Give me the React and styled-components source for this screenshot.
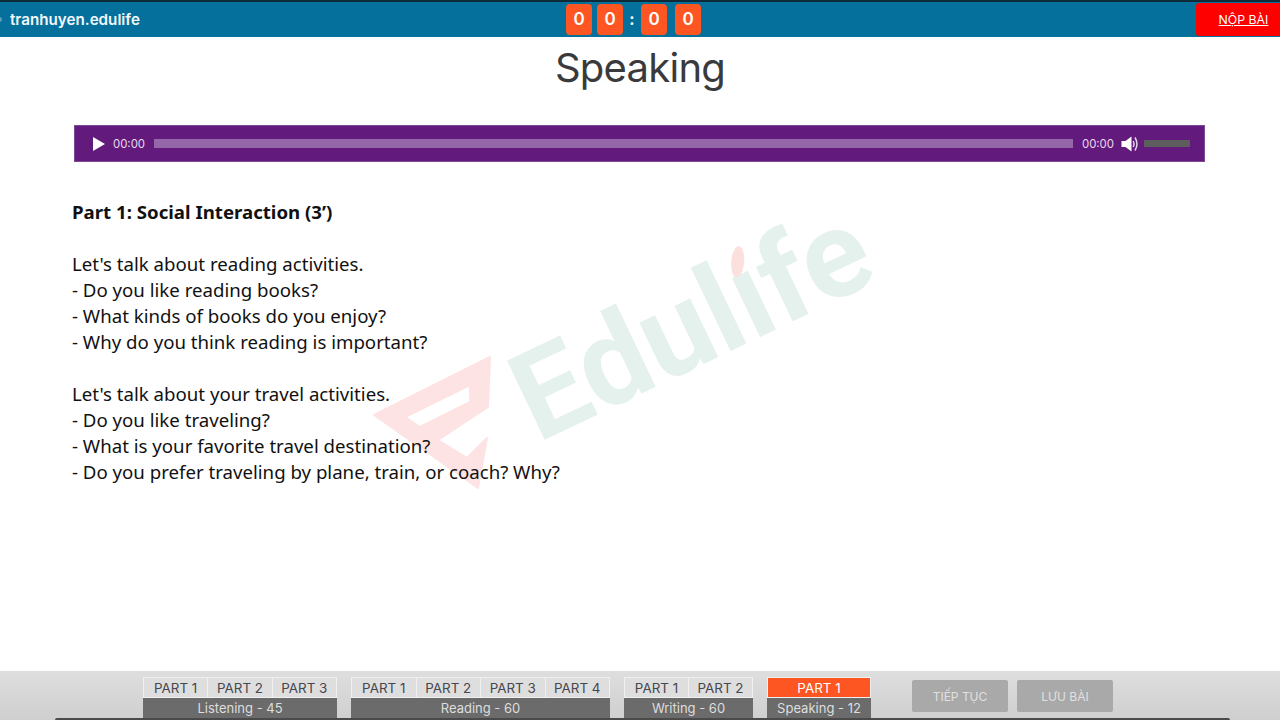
import styled, { createGlobalStyle } from "styled-components";

const GlobalStyle = createGlobalStyle`
  html, body {
    margin: 0;
    padding: 0;
    background: #fff;
  }
  #root {
    height: 720px;
  }
`;

const sections = [
  { label: "Listening - 45", parts: ["PART 1", "PART 2", "PART 3"], width: 194 },
  { label: "Reading - 60", parts: ["PART 1", "PART 2", "PART 3", "PART 4"], width: 259 },
  { label: "Writing - 60", parts: ["PART 1", "PART 2"], width: 129 },
  { label: "Speaking - 12", parts: ["PART 1"], width: 104, active: true },
];

const questions = [
  [
    "Let's talk about reading activities.",
    "- Do you like reading books?",
    "- What kinds of books do you enjoy?",
    "- Why do you think reading is important?",
  ],
  [
    "Let's talk about your travel activities.",
    "- Do you like traveling?",
    "- What is your favorite travel destination?",
    "- Do you prefer traveling by plane, train, or coach? Why?",
  ],
];

const App = () => {
  return (
    <Page>
      <GlobalStyle />
      <Header>
        <Brand>tranhuyen.edulife</Brand>
        <Timer>
          <Digit>0</Digit>
          <Digit>0</Digit>
          <Colon>:</Colon>
          <Digit>0</Digit>
          <Digit $wide>0</Digit>
        </Timer>
        <Submit>NỘP BÀI</Submit>
      </Header>

      <Main>
        <Watermark aria-hidden="true">
          <svg width="130" height="142" viewBox="0 0 130 142">
            <path
              fill="#fde3e3"
              fillRule="evenodd"
              stroke="#fde3e3"
              strokeWidth="2"
              strokeLinejoin="round"
              d="M118 4 L116 54 L66 87 L95 105 L115 85 L106 135 L2 62 Z M33 64 L48 74 L98 49 L98 32 Z"
            />
          </svg>
          <WatermarkText>
            Edul<Dotted>i</Dotted>fe
          </WatermarkText>
        </Watermark>

        <Title>Speaking</Title>

        <Player>
          <PlayIcon width="14" height="16" viewBox="0 0 14 16">
            <path fill="#fff" d="M1 1 L13 8 L1 15 Z" />
          </PlayIcon>
          <Time $before={7} $after={9}>00:00</Time>
          <Track />
          <Time $before={9} $after={7}>00:00</Time>
          <svg width="18" height="18" viewBox="0 0 18 18">
            <path fill="#fff" d="M0.5 6 H4.5 L10.5 1.5 V16.5 L4.5 12 H0.5 Z" />
            <path fill="none" stroke="#e5d4ea" strokeWidth="1.5" d="M12.2 6 Q13.8 9 12.2 12 M14 2.5 Q18 9 14 15.5" />
          </svg>
          <Volume />
        </Player>

        <Content>
          <Heading>Part 1: Social Interaction (3’)</Heading>
          {questions.map((group) => (
            <Group key={group[0]}>
              {group.map((line) => (
                <Line key={line}>{line}</Line>
              ))}
            </Group>
          ))}
        </Content>
      </Main>

      <Footer>
        {sections.map((section) => (
          <Section key={section.label} $width={section.width}>
            <Parts>
              {section.parts.map((part, i) => (
                <Part key={section.label + i} $active={section.active}>
                  {part}
                </Part>
              ))}
            </Parts>
            <SectionLabel>{section.label}</SectionLabel>
          </Section>
        ))}
        <Actions>
          <ActionButton>TIẾP TỤC</ActionButton>
          <ActionButton>LƯU BÀI</ActionButton>
        </Actions>
      </Footer>
    </Page>
  );
};

export default App;

const Page = styled.div`
  display: flex;
  flex-direction: column;
  width: 1280px;
  height: 720px;
  overflow: hidden;
  font-family: "Inter", "Liberation Sans", sans-serif;
`;

const Header = styled.header`
  flex: none;
  position: relative;
  display: grid;
  grid-template-columns: 556px auto 1fr;
  align-items: center;
  height: 35px;
  padding-left: 10px;
  background: #05709c;
  border-top: 2px solid #0e2a38;
  &::before {
    content: "";
    position: absolute;
    left: -3px;
    top: 15px;
    width: 5px;
    height: 5px;
    border-radius: 50%;
    background: #5b9dba;
  }
`;

const Brand = styled.div`
  font-size: 15.2px;
  font-weight: 600;
  color: #f2f8fb;
`;

const Timer = styled.div`
  display: flex;
  align-items: center;
  gap: 5px;
  margin-top: -1px;
`;

const Digit = styled.div`
  display: flex;
  align-items: center;
  justify-content: center;
  width: 26px;
  height: 31px;
  margin-left: ${(p) => (p.$wide ? 3 : 0)}px;
  border-radius: 4px;
  background: #fd5622;
  color: #fff;
  font-size: 17px;
  font-weight: 600;
`;

const Colon = styled.span`
  width: 8px;
  text-align: center;
  color: #fff;
  font-size: 16px;
  font-weight: 700;
`;

const Submit = styled.div`
  justify-self: end;
  display: flex;
  align-items: center;
  justify-content: center;
  box-sizing: border-box;
  width: 84px;
  height: 33px;
  margin-top: -1px;
  padding-left: 11px;
  border-radius: 3px 0 0 3px;
  background: #fe0000;
  color: #fff;
  font-size: 12.3px;
  text-decoration: underline;
`;

const Main = styled.main`
  position: relative;
  flex: 1;
  padding: 0 72px;
`;

const Watermark = styled.div`
  position: absolute;
  left: 372px;
  top: 316px;
  pointer-events: none;
`;

const WatermarkText = styled.div`
  position: absolute;
  left: 166px;
  top: -13px;
  font-family: "Roboto", "Liberation Sans", sans-serif;
  font-size: 123px;
  font-weight: 700;
  line-height: 1;
  color: #e4f1ec;
  transform: rotate(-25.5deg);
  transform-origin: 0 103.6px;
  white-space: nowrap;
`;

/* the logo swaps the dot of the i for a red leaf */
const Dotted = styled.span`
  position: relative;
  &::before {
    content: "";
    position: absolute;
    left: 4px;
    top: 14px;
    width: 26px;
    height: 32px;
    background: #fff;
  }
  &::after {
    content: "";
    position: absolute;
    left: 13px;
    top: 21px;
    width: 13px;
    height: 31px;
    border-radius: 50%;
    background: #fbe0de;
    transform: rotate(30deg);
  }
`;

const Title = styled.h1`
  margin: 0;
  height: 88px;
  padding-top: 7px;
  box-sizing: border-box;
  text-align: center;
  font-size: 40px;
  font-weight: 400;
  line-height: 48px;
  color: #3a3a3c;
  letter-spacing: -0.75px;
`;

const Player = styled.div`
  position: relative;
  display: flex;
  align-items: center;
  box-sizing: border-box;
  width: 1131px;
  height: 37px;
  margin-left: 2px;
  padding: 0 14px 0 17px;
  background: #621b7c;
  border: 1px solid #7d4a92;
`;

const PlayIcon = styled.svg`
  flex: none;
`;

const Time = styled.span`
  margin: 0 ${(p) => p.$after}px 0 ${(p) => p.$before}px;
  font-size: 11.4px;
  color: #e9d9ee;
`;

const Track = styled.div`
  flex: 1;
  height: 9px;
  background: #9566a8;
`;

const Volume = styled.div`
  width: 46px;
  height: 7px;
  margin-left: 5px;
  background: #5d5d5d;
`;

const Content = styled.div`
  position: relative;
  margin-top: 37px;
  font-family: "Noto Sans", "Open Sans", sans-serif;
  font-size: 18.65px;
  line-height: 26px;
  color: #111;
`;

const Heading = styled.div`
  font-weight: 700;
`;

const Group = styled.div`
  margin-top: 26px;
`;

const Line = styled.div``;

const Footer = styled.footer`
  flex: none;
  position: relative;
  display: flex;
  align-items: flex-start;
  gap: 14px;
  box-sizing: border-box;
  height: 49px;
  padding: 6px 0 0 143px;
  background: linear-gradient(#dedede, #cfcfcf);
  &::after {
    content: "";
    position: absolute;
    left: 55px;
    right: 50px;
    bottom: 0;
    height: 2px;
    border-radius: 2px 2px 0 0;
    background: #4a4a4a;
  }
`;

const Section = styled.div`
  display: flex;
  flex-direction: column;
  width: ${(p) => p.$width}px;
`;

const Parts = styled.div`
  display: flex;
  height: 21px;
`;

const Part = styled.div`
  flex: 1;
  display: flex;
  align-items: center;
  justify-content: center;
  box-sizing: border-box;
  border: 1px solid #f0f0f0;
  border-left-width: ${(p) => (p.$active ? 1 : 0)}px;
  background: ${(p) => (p.$active ? "#fd5622" : "#dedede")};
  color: ${(p) => (p.$active ? "#fff" : "#46464e")};
  font-size: 13.4px;
  &:first-child {
    border-left-width: 1px;
  }
`;

const SectionLabel = styled.div`
  height: 20px;
  background: #6b6b6b;
  color: #dedede;
  font-size: 13px;
  line-height: 20px;
  text-align: center;
`;

const Actions = styled.div`
  display: flex;
  gap: 9px;
  margin: 3px 0 0 27px;
`;

const ActionButton = styled.div`
  display: flex;
  align-items: center;
  justify-content: center;
  width: 96px;
  height: 32px;
  border-radius: 2px;
  background: #a9a9a9;
  color: #e0e0e0;
  font-size: 12px;
`;
